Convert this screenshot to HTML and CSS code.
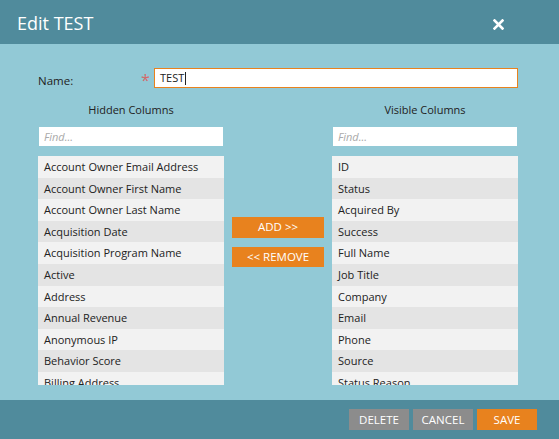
FILE: index.html
```html
<!DOCTYPE html>
<html lang="en">
<head>
    <meta charset="UTF-8">
    <meta name="viewport" content="width=device-width, initial-scale=1.0">
    <title>Edit TEST</title>
    <link rel="stylesheet" href="styles.css">
</head>
<body>
    <div class="dialog">
        <div class="head">
            <div class="title">Edit TEST</div>
            <div class="close">
                <svg width="11" height="11" viewBox="0 0 11 11">
                    <path d="M1.5 1.5 L9.5 9.5 M9.5 1.5 L1.5 9.5" stroke="#fff" stroke-width="2.6" stroke-linecap="square"/>
                </svg>
            </div>
        </div>
        <div class="body">
            <div class="name_row">
                <div class="label">Name:</div>
                <div class="req">*</div>
                <div class="name_input">TEST<span class="caret"></span></div>
            </div>
            <div class="cols">
                <div class="col">
                    <div class="col_title">Hidden Columns</div>
                    <div class="find">Find...</div>
                    <ul class="list">
                        <li>Account Owner Email Address</li>
                        <li>Account Owner First Name</li>
                        <li>Account Owner Last Name</li>
                        <li>Acquisition Date</li>
                        <li>Acquisition Program Name</li>
                        <li>Active</li>
                        <li>Address</li>
                        <li>Annual Revenue</li>
                        <li>Anonymous IP</li>
                        <li>Behavior Score</li>
                        <li>Billing Address</li>
                        <li>Billing City</li>
                    </ul>
                </div>
                <div class="mid">
                    <div class="btn orange">ADD &gt;&gt;</div>
                    <div class="btn orange">&lt;&lt; REMOVE</div>
                </div>
                <div class="col">
                    <div class="col_title">Visible Columns</div>
                    <div class="find">Find...</div>
                    <ul class="list">
                        <li>ID</li>
                        <li>Status</li>
                        <li>Acquired By</li>
                        <li>Success</li>
                        <li>Full Name</li>
                        <li>Job Title</li>
                        <li>Company</li>
                        <li>Email</li>
                        <li>Phone</li>
                        <li>Source</li>
                        <li>Status Reason</li>
                        <li>Lead Score</li>
                    </ul>
                </div>
            </div>
        </div>
        <div class="foot">
            <div class="btn gray">DELETE</div>
            <div class="btn gray">CANCEL</div>
            <div class="btn orange">SAVE</div>
        </div>
    </div>
</body>
</html>
```

FILE: styles.css
```css
*{
    margin: 0;
    padding: 0;
    list-style: none;
    box-sizing: border-box;
}
body{
    font-family: "Open Sans", "Liberation Sans", sans-serif;
    font-size: 11px;
    color: #222;
}
.dialog{
    width: 559px;
    height: 439px;
    display: flex;
    flex-direction: column;
    background: #92c9d6;
}
.head{
    height: 44px;
    background: #508b9c;
    display: flex;
    align-items: center;
    justify-content: space-between;
    padding: 0 55px 0 17px;
}
.title{
    color: #fff;
    font-size: 18px;
    line-height: 20px;
    margin-top: 2px;
}
.close{
    display: flex;
    margin-top: 4px;
}
.body{
    flex: 1;
    padding: 24px 41px 0 38px;
}
.name_row{
    display: flex;
    align-items: center;
    height: 20px;
}
.label{
    width: 103px;
    font-size: 11.5px;
    margin-top: 4px;
}
.req{
    width: 13px;
    color: #d46a6a;
    font-size: 16px;
    line-height: 16px;
    margin-top: 4px;
}
.name_input{
    flex: 1;
    height: 20px;
    border: 1px solid #e8821e;
    background: #fff;
    padding-left: 5px;
    line-height: 18px;
    font-size: 11px;
    display: flex;
    align-items: center;
}
.caret{
    width: 1px;
    height: 13px;
    background: #222;
    margin-left: 1px;
}
.cols{
    display: flex;
}
.col{
    width: 186px;
}
.col_title{
    text-align: center;
    line-height: 16px;
    margin-top: 14px;
}
.find{
    height: 19px;
    margin: 9px 1px 0;
    background: #fff;
    color: #aaa;
    font-style: italic;
    line-height: 19px;
    padding-left: 5px;
}
.list{
    margin-top: 10px;
    height: 229px;
    overflow: hidden;
}
.list li{
    height: 21.6px;
    line-height: 21.6px;
    padding-left: 6px;
    background: #f2f2f2;
    white-space: nowrap;
}
.list li:nth-child(even){
    background: #e4e4e4;
}
.mid{
    width: 108px;
    display: flex;
    flex-direction: column;
    align-items: center;
    gap: 9px;
    padding-top: 129px;
}
.btn{
    color: #fff;
    text-align: center;
    font-size: 11.5px;
}
.mid .btn{
    width: 92px;
    height: 20.5px;
    line-height: 20.5px;
}
.orange{
    background: #e8821e;
}
.gray{
    background: #8c8c8c;
}
.foot{
    height: 39px;
    background: #508b9c;
    display: flex;
    align-items: center;
    justify-content: flex-end;
    gap: 4px;
    padding-right: 22px;
}
.foot .btn{
    width: 60px;
    height: 21px;
    line-height: 21px;
}
```
